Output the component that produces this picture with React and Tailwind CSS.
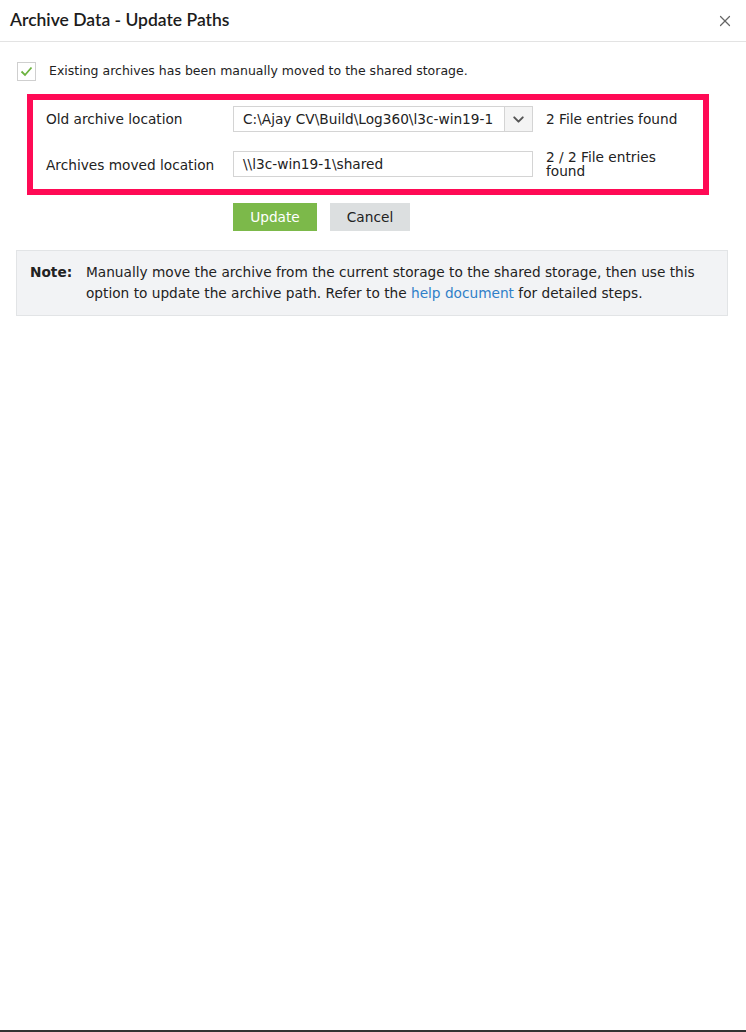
import { ChevronDown, X } from 'lucide-react'

const body = { fontFamily: '"DejaVu Sans", Verdana, sans-serif' }

function Check() {
  return (
    <span className="flex h-[19px] w-[19px] shrink-0 items-center justify-center border border-[#cfcfcf] bg-white">
      <svg width="13" height="11" viewBox="0 0 13 11" fill="none">
        <path d="M1.5 5.5 L5 9 L11.5 1.5" stroke="#6cb33f" strokeWidth="1.8" />
      </svg>
    </span>
  )
}

export default function App() {
  return (
    <div className="flex h-[1032px] w-[746px] flex-col bg-white text-[#222]" style={body}>
      {/* Header */}
      <div className="flex h-[42px] items-center justify-between border-b border-[#e3e3e3] pl-[10px] pr-[12px]">
        <h1 className="text-[17.5px] font-semibold text-[#1c1c1c]" style={{ fontFamily: 'Lato, sans-serif' }}>
          Archive Data - Update Paths
        </h1>
        <X size={18} strokeWidth={1.6} className="text-[#666]" />
      </div>

      <div className="flex-1 pl-[16px] pr-[18px] pt-[20px]">
        <label className="flex items-center gap-[13px] pl-[1px] text-[12.5px]">
          <Check />
          <span>Existing archives has been manually moved to the shared storage.</span>
        </label>

        {/* Highlighted paths */}
        <div className="ml-[11px] mt-[13px] w-[682px] border-[6px] border-[#ff0a55] px-[13px] pb-[12px] pt-[6px] text-[13.7px]">
          <div className="flex h-[26px] items-center">
            <span className="w-[187px]">Old archive location</span>
            <div className="flex h-[26px] w-[300px] border border-[#d4d4d4]">
              <span className="flex-1 overflow-hidden whitespace-nowrap px-[9px] leading-[24px]">
                C:\Ajay CV\Build\Log360\l3c-win19-1
              </span>
              <span className="flex w-[28px] items-center justify-center border-l border-[#d4d4d4] bg-[#f4f4f4]">
                <ChevronDown size={17} strokeWidth={2.8} className="text-[#555]" />
              </span>
            </div>
            <span className="ml-[13px]">2 File entries found</span>
          </div>
          <div className="mt-[19px] flex h-[26px] items-center">
            <span className="w-[187px] pt-[2px]">Archives moved location</span>
            <div className="h-[26px] w-[300px] border border-[#d4d4d4] px-[9px] leading-[24px]">
              \\l3c-win19-1\shared
            </div>
            <span className="ml-[13px] w-[140px] leading-[14px]">2 / 2 File entries found</span>
          </div>
        </div>

        {/* Actions */}
        <div className="ml-[217px] mt-[8px] flex gap-[13px] text-[13.7px]">
          <button className="h-[28px] w-[84px] bg-[#7cb94a] text-white">Update</button>
          <button className="h-[28px] w-[80px] bg-[#dcdfe0] text-[#222]">Cancel</button>
        </div>

        {/* Note */}
        <div className="mt-[19px] flex border border-[#e2e4e6] bg-[#f2f3f5] py-[11px] pl-[13px] pr-[14px] text-[13.7px] leading-[21px]">
          <span className="w-[56px] shrink-0 font-bold">Note:</span>
          <p>
            Manually move the archive from the current storage to the shared storage, then use this option to update the
            archive path. Refer to the <span className="text-[#2f7fc8]">help document</span> for detailed steps.
          </p>
        </div>
      </div>

      <div className="h-[2px] bg-[#333]" />
    </div>
  )
}
